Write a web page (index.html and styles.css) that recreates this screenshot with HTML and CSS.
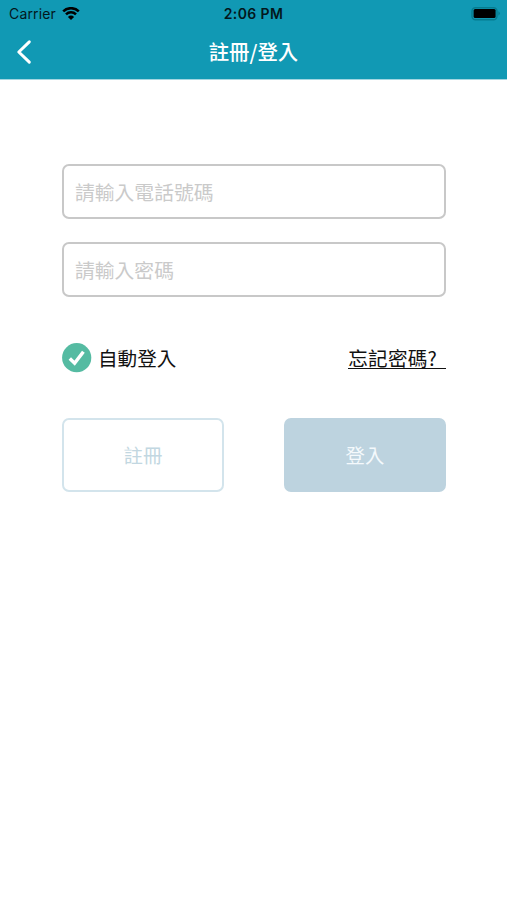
FILE: index.html
```html
<!DOCTYPE html>
<html lang="zh-Hant">
<head>
<meta charset="utf-8">
<title>註冊/登入</title>
<link rel="stylesheet" href="styles.css">
</head>
<body>
<header class="header">
  <div class="status">
    <div class="carrier">
      <span>Carrier</span>
      <svg class="wifi" viewBox="0 0 18 14" width="18" height="14" aria-hidden="true">
        <path d="M1.2 4.4A11 11 0 0 1 16.8 4.4M4 7.4A7 7 0 0 1 14 7.4" fill="none" stroke="currentColor" stroke-width="2.5"/>
        <path d="M9 13L5.9 9.9A4.4 4.4 0 0 1 12.1 9.9Z" fill="currentColor"/>
      </svg>
    </div>
    <span class="time">2:06 PM</span>
    <svg class="battery" viewBox="0 0 30 14" width="30" height="14" aria-hidden="true">
      <rect x="1" y="0.7" width="25" height="12" rx="3.5" fill="none" stroke="#067c8f" stroke-width="1.4"/>
      <rect x="2.6" y="2" width="22" height="9" rx="1.5" fill="#000"/>
      <path d="M27.4 4.3Q30.4 6.5 27.4 8.7Z" fill="#067c8f"/>
    </svg>
  </div>
  <nav class="nav">
    <svg class="back" viewBox="0 0 16 26" width="16" height="26" aria-hidden="true">
      <path d="M13.3 2.9L2.8 13L13.3 23.1" fill="none" stroke="#fff" stroke-width="3" stroke-linecap="round" stroke-linejoin="round"/>
    </svg>
    <h1 class="title">註冊/登入</h1>
  </nav>
</header>
<main class="form">
  <input class="field" type="tel" placeholder="請輸入電話號碼">
  <input class="field" type="password" placeholder="請輸入密碼">
  <div class="options">
    <div class="auto">
      <svg viewBox="0 0 30 30" width="30" height="30" aria-hidden="true">
        <circle cx="14.7" cy="14.7" r="14.6" fill="#55bba2"/>
        <path d="M7.8 15.6L12.6 20.2L21.4 8.8" fill="none" stroke="#fff" stroke-width="3.5"/>
      </svg>
      <span>自動登入</span>
    </div>
    <a class="forgot">忘記密碼?</a>
  </div>
  <div class="actions">
    <button class="button outline">註冊</button>
    <button class="button solid">登入</button>
  </div>
</main>
</body>
</html>
```
FILE: styles.css
```css
* { box-sizing: border-box; }
body {
  margin: 0;
  min-height: 900px;
  background: #fff;
  color: #111;
  font-family: "Inter", "Noto Sans CJK TC", sans-serif;
}
.header {
  height: 80px;
  background: #1199b4;
  border-bottom: 1px solid #a3d6e1;
}
.status {
  display: grid;
  grid-template-columns: 1fr auto 1fr;
  align-items: center;
  height: 27px;
  padding: 0 7px 0 7px;
  color: #03171c;
  font-size: 14px;
}
.carrier {
  display: flex;
  align-items: center;
  gap: 6px;
  padding-left: 2px;
  letter-spacing: 0.15px;
}
.wifi { color: #000; }
.time {
  font-size: 14px;
  font-weight: 600;
  letter-spacing: 0.4px;
}
.battery { justify-self: end; margin-right: -1px; }
.nav {
  display: grid;
  grid-template-columns: 1fr auto 1fr;
  align-items: center;
  height: 50px;
  padding: 0 16px;
}
.title {
  margin: 0;
  padding-bottom: 2px;
  color: #fff;
  font-size: 20.4px;
  font-weight: 500;
  line-height: 28px;
  font-family: "Noto Sans CJK TC", sans-serif;
}
.form { padding: 84px 61px 0 62px; }
.field {
  display: block;
  width: 384px;
  height: 55px;
  margin: 0 0 23px;
  padding: 0 11px 1px;
  border: 2px solid #c8c8c8;
  border-radius: 7px;
  background: #fff;
  font: 400 19.8px "Noto Sans CJK TC", sans-serif;
}
.field::placeholder { color: #cacaca; opacity: 1; }
.options {
  display: flex;
  justify-content: space-between;
  align-items: center;
  height: 30px;
  margin-top: 46px;
  font: 400 19.6px/30px "Noto Sans CJK TC", sans-serif;
}
.auto { display: flex; align-items: center; height: 30px; gap: 6px; }
.forgot {
  margin-top: 1px;
  padding-right: 9px;
  border-bottom: 1px solid #111;
  line-height: 20px;
  letter-spacing: 0.2px;
}
.actions { display: flex; justify-content: space-between; margin-top: 45px; }
.button {
  width: 162px;
  height: 74px;
  padding: 0 0 2px;
  border: 2px solid #d3e4ec;
  border-radius: 7px;
  font: 400 19.4px "Noto Sans CJK TC", sans-serif;
}
.outline { background: #fff; color: #c2d7e1; }
.solid { background: #bdd3df; border-color: #bdd3df; color: #f4f9fc; }
```
